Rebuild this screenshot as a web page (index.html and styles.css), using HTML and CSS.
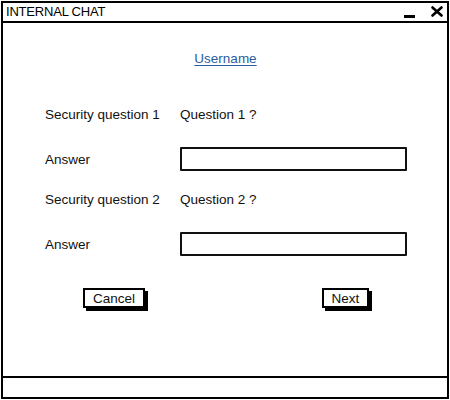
FILE: index.html
```html
<!DOCTYPE html>
<html>
<head>
<meta charset="utf-8">
<link rel="stylesheet" href="styles.css">
</head>
<body>
<div class="window">
  <div class="titlebar">
    <span class="title">INTERNAL CHAT</span>
    <div class="controls">
      <span class="min"></span>
      <svg class="close" width="12" height="11" viewBox="0 0 12 11"><path d="M1.5 1.5 L10.5 9.5 M10.5 1.5 L1.5 9.5" stroke="#000" stroke-width="2.6" stroke-linecap="round"/></svg>
    </div>
  </div>
  <div class="content">
    <div class="user-row"><a class="username" href="#">Username</a></div>
    <div class="form">
      <div class="row r1"><span class="label">Security question 1</span><span class="value">Question 1 ?</span></div>
      <div class="row r2"><span class="label">Answer</span><span class="input"></span></div>
      <div class="row r3"><span class="label">Security question 2</span><span class="value">Question 2 ?</span></div>
      <div class="row r4"><span class="label">Answer</span><span class="input"></span></div>
    </div>
    <div class="buttons">
      <span class="btn cancel">Cancel</span>
      <span class="btn next">Next</span>
    </div>
  </div>
  <div class="statusbar"></div>
</div>
</body>
</html>
```

FILE: styles.css
```css
html, body {
  margin: 0;
  padding: 0;
  background: #fff;
}
body {
  font-family: "Liberation Sans", Arial, sans-serif;
  font-size: 13.5px;
  color: #111;
}
.window {
  box-sizing: border-box;
  margin: 1px 0 0 1px;
  width: 448px;
  height: 398px;
  border: 2px solid #000;
  display: flex;
  flex-direction: column;
}
.titlebar {
  height: 18px;
  border-bottom: 2px solid #000;
  display: flex;
  align-items: center;
  justify-content: space-between;
  padding: 0 4px 0 3px;
}
.title {
  font-size: 13px;
  letter-spacing: -0.2px;
  color: #000;
  line-height: 18px;
}
.controls {
  display: flex;
  align-items: center;
  gap: 16px;
  height: 18px;
}
.min {
  display: block;
  width: 11px;
  height: 3px;
  background: #000;
  margin-top: 9px;
}
.close {
  display: block;
  margin-top: -2px;
}
.content {
  flex: 1;
  display: flex;
  flex-direction: column;
}
.user-row {
  display: flex;
  justify-content: center;
  padding-top: 28px;
  height: 16px;
}
.username {
  color: #2c5c9c;
  text-decoration: underline;
  text-underline-offset: 2px;
  font-size: 13.5px;
  line-height: 16px;
  padding-left: 1px;
}
.form {
  padding-left: 42px;
  display: flex;
  flex-direction: column;
  margin-top: 35px;
}
.row {
  display: flex;
  align-items: center;
  height: 24px;
}
.r2 { margin-top: 21px; }
.r3 { margin-top: 16px; }
.r4 { margin-top: 21px; }
.label {
  width: 135px;
  color: #111;
}
.value {
  color: #111;
}
.input {
  display: block;
  box-sizing: border-box;
  width: 227px;
  height: 24px;
  border: 2px solid #111;
  border-radius: 1px;
  background: #fff;
}
.buttons {
  display: flex;
  justify-content: space-between;
  padding: 0 78px 0 80px;
  margin-top: 32px;
}
.btn {
  box-sizing: border-box;
  height: 20px;
  border: 2px solid #000;
  background: #fff;
  box-shadow: 3px 3px 0 #000;
  display: flex;
  align-items: center;
  justify-content: center;
  font-size: 13.5px;
  color: #111;
}
.cancel { width: 62px; }
.next { width: 47px; }
.statusbar {
  height: 19px;
  border-top: 2px solid #000;
}
```
